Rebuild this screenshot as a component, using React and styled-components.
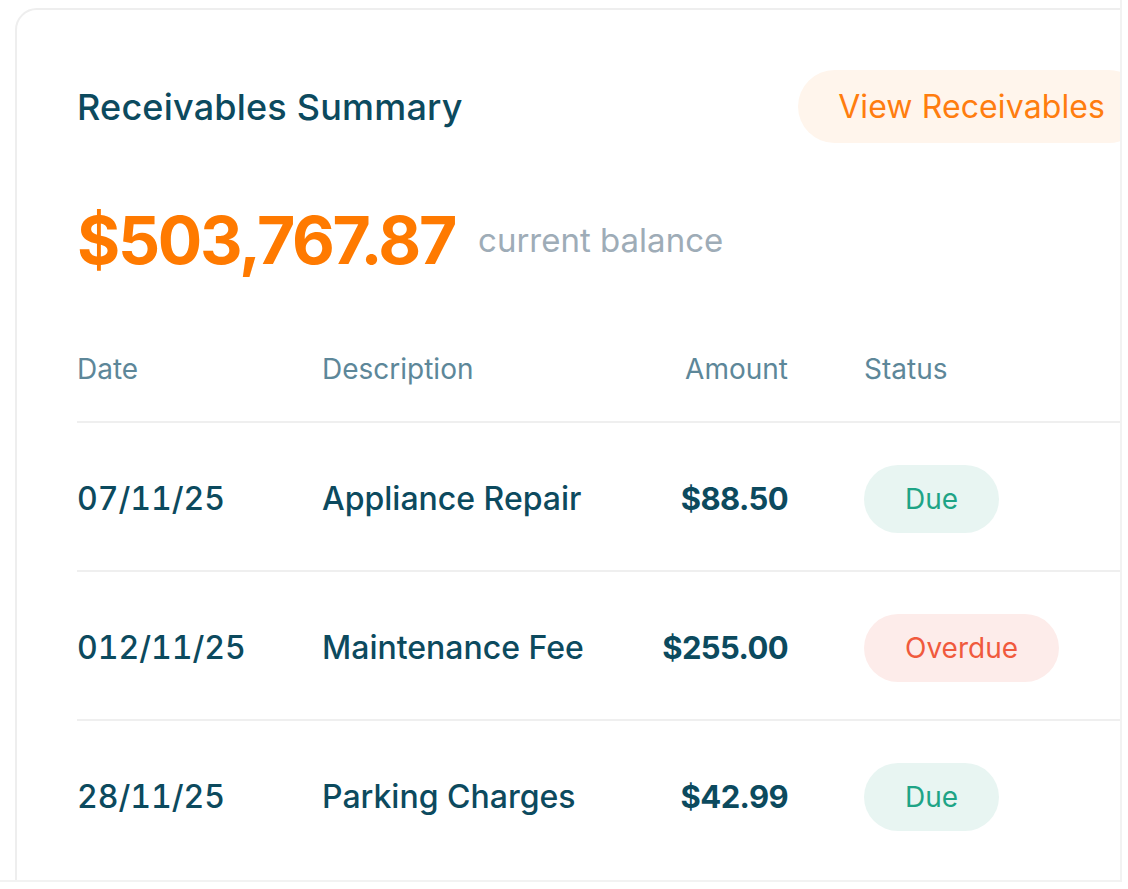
import React from 'react';
import styled, { createGlobalStyle } from 'styled-components';

const GlobalStyle = createGlobalStyle`
  html, body {
    margin: 0;
    padding: 0;
    background: #ffffff;
  }
  body {
    font-family: Inter, "Noto Sans", "Liberation Sans", sans-serif;
    -webkit-font-smoothing: antialiased;
  }
`;

const colors = {
  ink: '#0c4a5e',
  muted: '#5d8799',
  orange: '#ff7a00',
  grey: '#9eacb7',
  line: '#efefef',
};

const Frame = styled.div`
  width: 1122px;
  height: 882px;
  box-sizing: border-box;
  padding: 8px 0 0 15px;
  overflow: hidden;
  border-right: 2px solid #f2f2f2;
  border-bottom: 2px solid #f2f2f2;
`;

const Card = styled.section`
  width: 1193px;
  box-sizing: border-box;
  padding: 60px 61px 40px 60px;
  border: 2px solid #eeeeee;
  border-radius: 22px;
  background: #ffffff;
`;

const Header = styled.header`
  display: flex;
  align-items: center;
  justify-content: space-between;
`;

const Title = styled.h2`
  margin: 0;
  font-size: 36px;
  font-weight: 500;
  letter-spacing: 0.2px;
  color: ${colors.ink};
`;

const ViewButton = styled.button`
  height: 73px;
  padding: 0 40px;
  border: none;
  border-radius: 37px;
  background: #fff5ec;
  color: #ff7d0f;
  font-family: inherit;
  font-size: 32px;
  font-weight: 400;
  letter-spacing: 0.1px;
  cursor: pointer;
`;

const Balance = styled.div`
  display: flex;
  align-items: center;
  gap: 23px;
  margin-top: 64px;
`;

const Amount = styled.span`
  font-size: 66px;
  line-height: 1;
  font-weight: 700;
  letter-spacing: -2.3px;
  color: ${colors.orange};
`;

const BalanceLabel = styled.span`
  font-size: 33px;
  color: ${colors.grey};
`;

const Table = styled.div`
  margin-top: 80px;
`;

const Row = styled.div`
  display: grid;
  grid-template-columns: 245px 300px 166px 1fr;
  align-items: ${p => (p.$head ? 'start' : 'center')};
  height: ${p => (p.$head ? '68px' : '147px')};
  border-top: ${p => (p.$head ? 'none' : `2px solid ${colors.line}`)};
`;

const HeadCell = styled.div`
  font-size: 28px;
  line-height: 32px;
  color: ${colors.muted};
  text-align: ${p => (p.$right ? 'right' : 'left')};
  padding-left: ${p => (p.$status ? '76px' : '0')};
`;

const Cell = styled.div`
  padding-top: 4px;
  font-size: ${p => (p.$bold ? '31px' : '32px')};
  font-weight: ${p => (p.$bold ? 700 : 500)};
  letter-spacing: ${p => (p.$bold ? '-0.6px' : '0')};
  font-variant-numeric: ${p => (p.$num ? 'tabular-nums' : 'normal')};
  color: ${colors.ink};
  text-align: ${p => (p.$right ? 'right' : 'left')};
`;

const StatusCell = styled.div`
  padding-left: 76px;
  padding-top: 4px;
`;

const Pill = styled.span`
  display: inline-flex;
  align-items: center;
  height: 68px;
  padding: 0 41px;
  border-radius: 34px;
  font-size: 28px;
  background: ${p => (p.$overdue ? '#fdecea' : '#e8f5f2')};
  color: ${p => (p.$overdue ? '#f05a3d' : '#1ea486')};
`;

const rows = [
  { date: '07/11/25', desc: 'Appliance Repair', amount: '$88.50', status: 'Due' },
  { date: '012/11/25', desc: 'Maintenance Fee', amount: '$255.00', status: 'Overdue' },
  { date: '28/11/25', desc: 'Parking Charges', amount: '$42.99', status: 'Due' },
];

export default function App() {
  return (
    <>
      <GlobalStyle />
      <Frame>
        <Card>
          <Header>
            <Title>Receivables Summary</Title>
            <ViewButton>View Receivables</ViewButton>
          </Header>

          <Balance>
            <Amount>$503,767.87</Amount>
            <BalanceLabel>current balance</BalanceLabel>
          </Balance>

          <Table>
            <Row $head>
              <HeadCell>Date</HeadCell>
              <HeadCell>Description</HeadCell>
              <HeadCell $right>Amount</HeadCell>
              <HeadCell $status>Status</HeadCell>
            </Row>
            {rows.map(r => (
              <Row key={r.date}>
                <Cell $num>{r.date}</Cell>
                <Cell>{r.desc}</Cell>
                <Cell $right $bold>{r.amount}</Cell>
                <StatusCell>
                  <Pill $overdue={r.status === 'Overdue'}>{r.status}</Pill>
                </StatusCell>
              </Row>
            ))}
          </Table>
        </Card>
      </Frame>
    </>
  );
}
